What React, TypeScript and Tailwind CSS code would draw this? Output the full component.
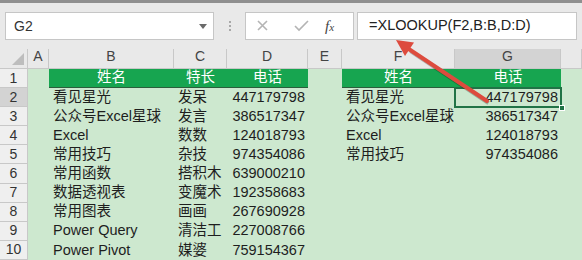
import React from "react";

const cols = [
  { key: "A", w: "w-[21px]" },
  { key: "B", w: "w-[125px]" },
  { key: "C", w: "w-[53px]" },
  { key: "D", w: "w-[81px]" },
  { key: "E", w: "w-[34px]" },
  { key: "F", w: "w-[113px]" },
  { key: "G", w: "w-[106px]" },
  { key: "", w: "flex-1" },
];

const left = [
  ["看见星光", "发呆", "447179798"],
  ["公众号Excel星球", "发言", "386517347"],
  ["Excel", "数数", "124018793"],
  ["常用技巧", "杂技", "974354086"],
  ["常用函数", "搭积木", "639000210"],
  ["数据透视表", "变魔术", "192358683"],
  ["常用图表", "画画", "267690928"],
  ["Power Query", "清洁工", "227008766"],
  ["Power Pivot", "媒婆", "759154367"],
];

const right = [
  ["看见星光", "447179798"],
  ["公众号Excel星球", "386517347"],
  ["Excel", "124018793"],
  ["常用技巧", "974354086"],
];

function RowHead({ n, active }: { n: number; active?: boolean }) {
  return (
    <div
      className={`w-[28px] shrink-0 flex items-center justify-center border-r border-b border-[#c8c8c8] text-[14px] text-[#333] ${
        active ? "bg-[#d3d3d3]" : "bg-[#efefef]"
      }`}
    >
      {n}
    </div>
  );
}

function Cell({
  w,
  children,
  green,
  align = "left",
  selected,
}: {
  w: string;
  children?: React.ReactNode;
  green?: boolean;
  align?: "left" | "right" | "center";
  selected?: boolean;
}) {
  const a = align === "right" ? "justify-end pr-[3px]" : align === "center" ? "justify-center" : "justify-start pl-[4px]";
  return (
    <div
      className={`${w} shrink-0 relative flex items-center whitespace-nowrap ${a} ${
        green ? "bg-[#17a550] text-white border-b border-[#2c5e3c]" : "text-[#1e1e1e]"
      }`}
    >
      {children}
      {selected && (
        <>
          <div className="absolute inset-[-1px] border-2 border-[#217346]" />
          <div className="absolute right-[-4px] bottom-[-4px] w-[6px] h-[6px] bg-[#217346] border border-white" />
        </>
      )}
    </div>
  );
}

export default function App() {
  return (
    <div
      className="w-[582px] h-[260px] overflow-hidden relative bg-[#cde8cf] text-[14.5px]"
      style={{ fontFamily: '"Liberation Sans", "Noto Sans CJK SC", sans-serif' }}
    >
      {/* formula bar */}
      <div className="h-[49px] bg-[#e9e9e9] border-t-[3px] border-[#8f8f8f] flex items-start pt-[9px]">
        <div className="ml-[5px] w-[209px] h-[28px] bg-white border border-[#c6c6c6] flex items-center pl-[8px] pr-[6px] text-[14px] text-[#333]">
          <span className="flex-1">G2</span>
          <span className="w-0 h-0 border-l-[4px] border-r-[4px] border-t-[5px] border-l-transparent border-r-transparent border-t-[#6a6a6a]" />
        </div>
        <div className="w-[31px] h-[28px] flex flex-col items-center justify-center gap-[2px]">
          <span className="w-[2px] h-[2px] bg-[#a8a8a8]" />
          <span className="w-[2px] h-[2px] bg-[#a8a8a8]" />
          <span className="w-[2px] h-[2px] bg-[#a8a8a8]" />
        </div>
        <div className="w-[109px] h-[28px] bg-white border border-[#c6c6c6] flex items-center">
          <svg width="38" height="28" viewBox="0 0 38 28">
            <path d="M12 9 L21 18 M21 9 L12 18" stroke="#b4b4b4" strokeWidth="1.6" />
          </svg>
          <svg width="38" height="28" viewBox="0 0 38 28">
            <path d="M11 14 L15 18 L24 9" stroke="#b4b4b4" strokeWidth="1.6" fill="none" />
          </svg>
          <span
            className="text-[15px] italic text-[#444] ml-[3px]"
            style={{ fontFamily: '"Liberation Serif", serif' }}
          >
            f<span className="text-[11px]">x</span>
          </span>
        </div>
        <div className="ml-[3px] w-[220px] h-[28px] bg-white border border-[#c6c6c6] flex items-center pl-[11px] text-[14.5px] text-[#222]">
          =XLOOKUP(F2,B:B,D:D)
        </div>
      </div>

      {/* column headers */}
      <div className="h-[20px] flex bg-[#e9e9e9] text-[14px] text-[#444]">
        <div className="w-[28px] shrink-0 relative border-r border-b border-[#c8c8c8]">
          <svg className="absolute right-[3px] bottom-[3px]" width="12" height="12" viewBox="0 0 12 12">
            <path d="M12 0 L12 12 L0 12 Z" fill="#bdbdbd" />
          </svg>
        </div>
        {cols.map((c, i) => (
          <div
            key={i}
            className={`${c.w} shrink-0 flex items-end justify-center pb-[1px] border-r border-b border-[#c8c8c8] ${
              c.key === "G" ? "bg-[#d3d3d3]" : ""
            }`}
          >
            {c.key}
          </div>
        ))}
      </div>

      {/* row 1 */}
      <div className="h-[19.1px] flex">
        <RowHead n={1} />
        <Cell w="w-[21px]" />
        <Cell w="w-[125px]" green align="center">姓名</Cell>
        <Cell w="w-[53px]" green align="center">特长</Cell>
        <Cell w="w-[81px]" green align="center">电话</Cell>
        <Cell w="w-[34px]" />
        <Cell w="w-[113px]" green align="center">姓名</Cell>
        <Cell w="w-[106px]" green align="center">电话</Cell>
      </div>

      {left.map((r, i) => {
        const rr = right[i];
        return (
          <div key={i} className="h-[19.1px] flex">
            <RowHead n={i + 2} active={i === 0} />
            <Cell w="w-[21px]" />
            <Cell w="w-[125px]">{r[0]}</Cell>
            <Cell w="w-[53px]">{r[1]}</Cell>
            <Cell w="w-[81px]" align="right">{r[2]}</Cell>
            <Cell w="w-[34px]" />
            <Cell w="w-[113px]">{rr ? rr[0] : null}</Cell>
            <Cell w="w-[106px]" align="right" selected={i === 0}>
              {rr ? rr[1] : null}
            </Cell>
          </div>
        );
      })}
      <div className="h-[10px] flex">
        <div className="w-[28px] bg-[#efefef] border-r border-[#c8c8c8]" />
      </div>

      {/* red arrow */}
      <svg className="absolute inset-0 pointer-events-none" width="582" height="260" viewBox="0 0 582 260">
        <g opacity="0.25" transform="translate(1.5,2)">
          <line x1="487" y1="101" x2="409" y2="49" stroke="#000" strokeWidth="4" />
        </g>
        <line x1="487" y1="101" x2="408" y2="48.5" stroke="#dd4b3e" strokeWidth="4" strokeLinecap="round" />
        <polygon points="396,40 414,42.5 405,56" fill="#dd4b3e" />
      </svg>
    </div>
  );
}
